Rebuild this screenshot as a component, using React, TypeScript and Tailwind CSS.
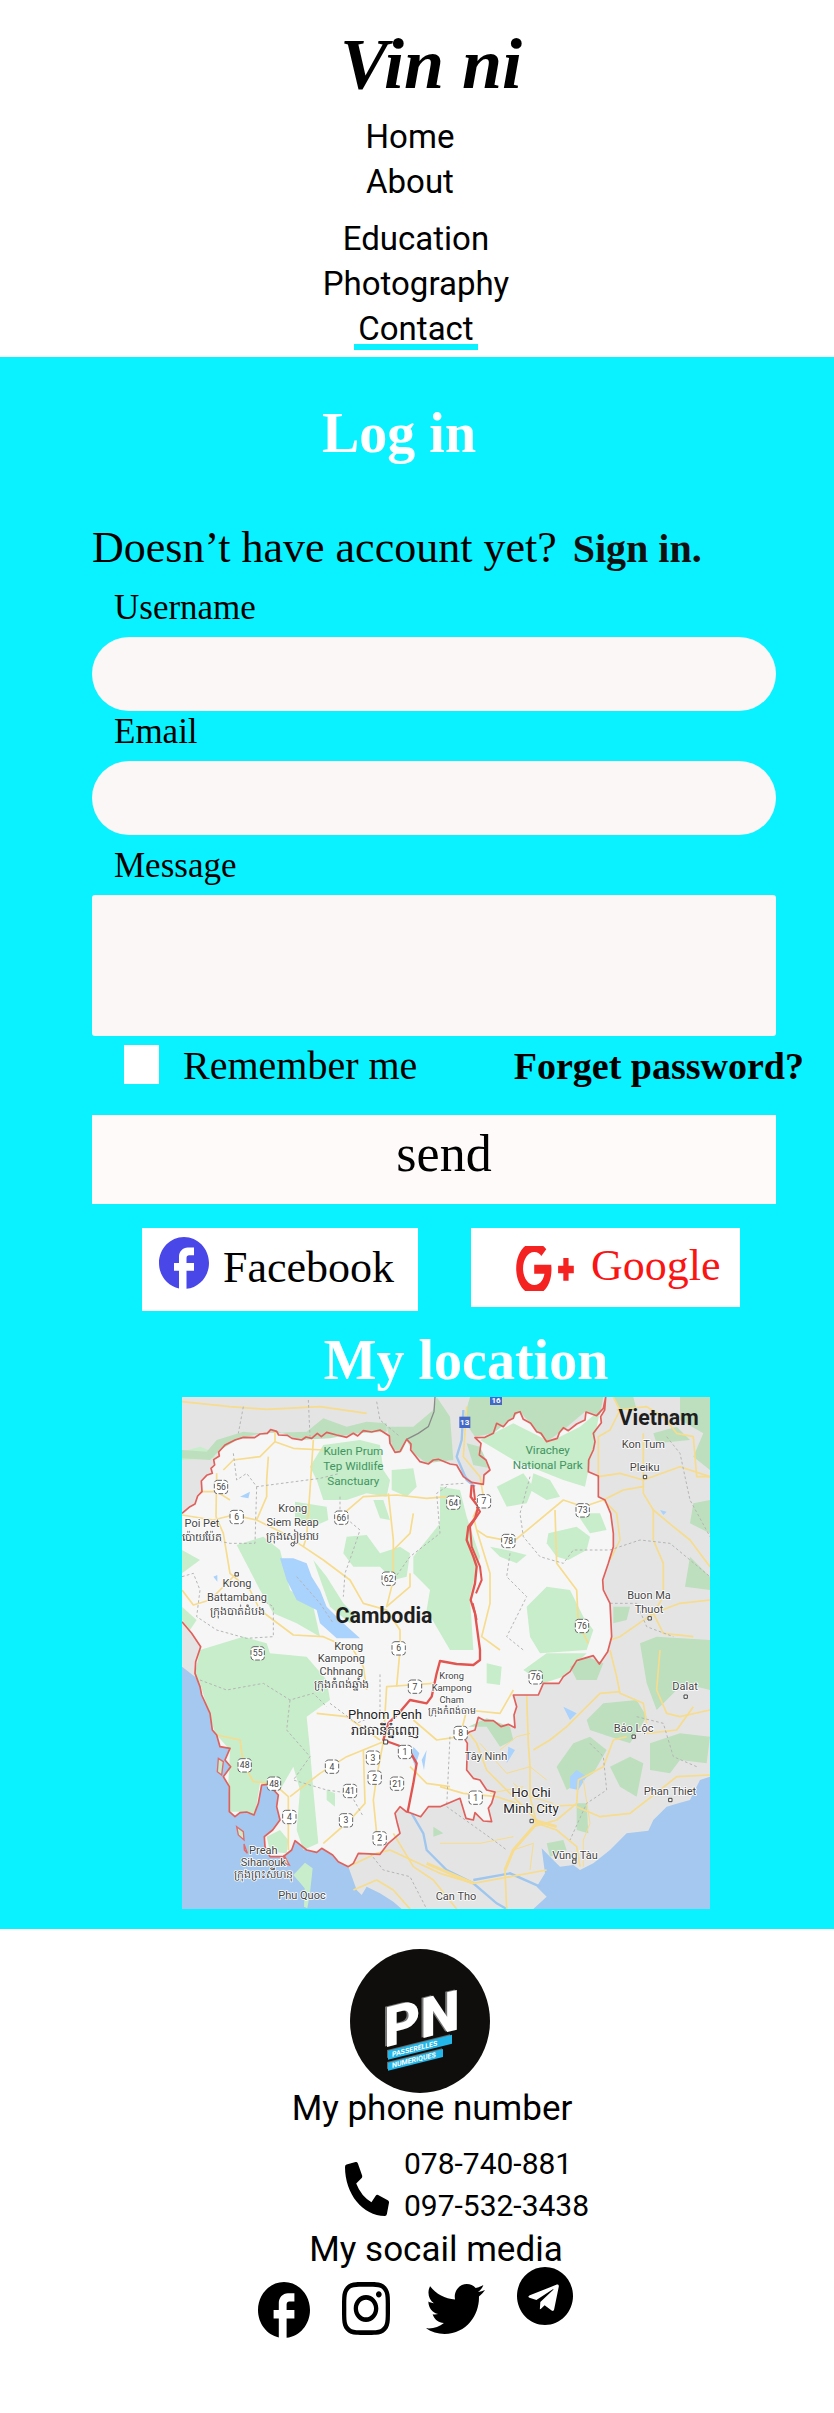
import React from "react";
import { MdFacebook } from "react-icons/md";
import { FaGooglePlusG, FaInstagram, FaPhoneAlt, FaTelegram, FaTwitter } from "react-icons/fa";

const greens = [
  "M6 185 60 170 100 185 105 205 6 210Z",
  "M430 165 540 150 600 165 610 240 630 270 620 320 560 310 500 330 430 330 410 270 390 230Z",
  "M635 240 700 235 710 290 680 320 635 300Z",
  "M700 160 740 190 730 200 690 175Z",
  "M345 335 440 350 445 390 400 410 345 405Z",
  "M580 330 610 330 630 390 600 385Z",
  "M500 440 560 435 600 490 660 470 690 490 680 560 640 570 600 530 520 530 490 490Z",
  "M780 290 840 300 860 380 900 500 870 620 880 780 810 780 740 660 750 600 700 550 700 500 780 400Z",
  "M170 465 250 440 300 480 330 600 400 650 420 740 350 700 280 670 240 600Z",
  "M6 480 60 510 6 550Z",
  "M400 510 440 560 490 640 530 680 510 700 450 650Z",
  "M6 650 50 690 30 720 6 690Z",
  "M60 780 190 740 260 760 270 790 380 800 440 870 450 930 380 980 390 1080 400 1200 415 1360 370 1380 350 1320 360 1200 340 1130 300 1200 240 1180 225 1275 180 1265 150 1265 145 1180 150 1080 105 1030 60 880 45 850Z",
  "M260 1340 300 1320 325 1350 320 1390 270 1385Z",
  "M440 1200 465 1210 465 1250 440 1230Z",
  "M900 150 1000 100 1110 155 1200 110 1260 60 1240 170 1215 290 1150 270 1050 230 1000 210Z",
  "M950 290 1030 250 1060 290 1040 340 980 350Z",
  "M1060 250 1110 270 1140 320 1100 330 1050 300Z",
  "M1105 430 1190 410 1230 440 1220 480 1165 510 1130 500 1100 460Z",
  "M1190 370 1260 370 1280 420 1230 430Z",
  "M930 470 980 480 1040 495 1010 520 960 500Z",
  "M1040 650 1100 590 1170 600 1210 680 1240 720 1220 780 1080 790 1050 740Z",
  "M1030 840 1100 790 1220 790 1150 860 1090 880Z",
  "M920 820 965 830 960 885 920 880Z",
];

const darkGreens = [
  "M6 180 80 185 110 150 190 125 240 130 380 125 430 85 500 110 560 95 620 100 620 125 530 130 450 145 360 150 285 120 180 145 120 180 90 210 6 205Z",
  "M620 110 700 110 760 60 770 21 810 80 820 210 740 220 700 190 680 150 665 185 640 180Z",
  "M870 21 1270 21 1260 75 1215 65 1150 120 1100 155 1020 65 940 130 885 140 850 90Z",
  "M860 160 900 170 930 235 880 225Z",
  "M1300 21 1360 21 1370 60 1320 60Z",
  "M1500 21 1590 21 1590 240 1540 200 1570 130 1500 90Z",
  "M1420 130 1490 110 1530 150 1430 160Z",
  "M1540 340 1590 330 1590 430 1530 400Z",
  "M1530 500 1590 560 1590 600 1515 590Z",
  "M1300 650 1350 650 1340 690 1300 700Z",
  "M1380 760 1430 740 1590 750 1590 900 1510 880 1430 960 1400 880Z",
  "M1170 830 1220 800 1270 820 1250 870 1190 870Z",
  "M1220 990 1270 940 1370 930 1400 980 1350 1060 1290 1040 1230 1020Z",
  "M1130 1130 1180 1060 1230 1040 1280 1080 1240 1150 1160 1200Z",
  "M1290 1130 1350 1100 1390 1120 1370 1220 1320 1190Z",
  "M1410 1060 1500 1030 1590 1040 1580 1120 1500 1110 1470 1150 1410 1140Z",
  "M865 1010 920 985 990 1010 1000 1050 960 1070 920 1010Z",
  "M1190 1240 1220 1240 1225 1330 1190 1320Z",
  "M1100 1360 1150 1350 1160 1380 1110 1400Z",
  "M760 1310 790 1330 760 1340Z",
];

const roads = [
  "M6 35 150 50 260 58 420 50 560 70",
  "M6 375 100 390 160 375 230 390 310 430 370 470 430 510 510 570 550 640 620 660 660 720 660 780 650 890",
  "M110 250 108 380 130 430 150 550 210 600 240 660 340 735 430 740 520 780 550 830 560 900",
  "M6 600 40 645 90 630 165 555",
  "M60 305 110 305 150 330",
  "M285 120 285 155 240 200 160 210 130 240",
  "M285 155 340 175 430 180",
  "M400 150 390 300 380 440 370 470",
  "M230 390 260 320 260 270 265 200",
  "M480 380 550 320 650 315 740 325 800 320",
  "M625 310 640 450 640 570 620 650 690 590 690 550",
  "M700 370 690 430 640 480",
  "M860 50 850 200 900 260 910 320 880 380 890 420 930 550 930 640 905 740 960 780",
  "M890 420 920 440 1000 455 1150 330 1210 350 1270 330",
  "M1125 360 1130 520 1190 600 1195 700 1225 760",
  "M1270 330 1310 370 1320 450 1290 510",
  "M1300 21 1320 60 1290 120 1255 140 1255 260 1320 250 1390 270 1500 230 1590 260",
  "M1310 60 1400 50 1450 80 1490 130 1540 140 1550 260 1590 260",
  "M1390 130 1390 310 1420 360 1480 410 1530 450 1590 530",
  "M1270 330 1330 300 1390 290",
  "M1420 360 1420 450 1450 520 1450 620 1420 670 1320 740 1290 750",
  "M1420 670 1500 640 1590 630",
  "M1420 670 1450 730 1540 740",
  "M1290 780 1310 860 1320 910 1390 940 1400 1000",
  "M1320 905 1260 910 1210 960 1160 1010 1110 1050 1060 1080",
  "M1440 780 1430 900 1460 970 1500 980 1590 960",
  "M1400 1030 1490 1020 1540 950",
  "M1060 1310 1130 1290 1190 1240 1195 1170 1270 1130 1300 1050 1340 1040",
  "M1590 1155 1490 1160 1440 1200 1350 1270 1260 1280 1190 1250",
  "M1040 915 1045 1060 1050 1130 1050 1220 1070 1300",
  "M860 1020 890 1060 920 1140 990 1210 1080 1300",
  "M780 1190 850 1210 950 1220 1010 1240",
  "M1070 1300 1130 1320 1190 1370 1200 1430",
  "M1080 1250 1190 1245",
  "M1070 1300 1000 1380 975 1440 980 1557",
  "M640 1330 700 1430 760 1470 830 1557",
  "M505 1430 590 1390 630 1380 780 1450 880 1480 1100 1440",
  "M520 1500 590 1470 640 1500 690 1557",
  "M330 1220 420 1150 500 1100 610 1055 590 1160 580 1230 590 1330",
  "M110 1035 180 1050 190 1120 220 1175 280 1180 325 1220 325 1380",
  "M550 1080 555 1240 510 1290 430 1360",
  "M610 1055 620 890 690 885 760 880",
  "M690 1130 740 1180 810 1190",
  "M700 990 770 1050 840 1040 860 960 960 970 1000 900",
  "M410 970 500 980 600 1050",
];

const dashed = [
  "M190 50 175 130 M385 30 390 140 M590 35 600 90 660 140",
  "M160 190 170 270 200 250 230 290 420 265 480 250",
  "M230 290 225 460 150 460 100 450",
  "M6 560 40 550 60 600 50 680 110 720 200 745 280 740 280 650 230 620",
  "M350 560 420 640 460 700",
  "M480 320 480 370 540 420 520 480 495 550 490 620",
  "M800 290 770 310 780 430 690 500 640 570",
  "M850 280 780 285",
  "M1050 260 1020 370 1030 440 1080 500 1150 520 1180 480 1290 480 1380 450 1470 460 1590 560",
  "M990 490 980 560 1040 620 980 740 1030 780",
  "M60 870 140 900 250 880 330 930 400 910 440 950",
  "M330 930 320 1020 390 1100 340 1170 440 1200 510 1210 550 1280",
  "M450 940 530 1000 600 970 600 850",
  "M570 1390 610 1440 690 1460 740 1557",
  "M1230 1060 1270 1100 1280 1200 1220 1240 1170 1350",
  "M1370 980 1450 1000 1480 1100 1550 1130",
  "M1290 640 1370 640 1400 710 1480 740",
  "M1460 140 1500 190 1530 330 1590 440",
  "M810 1040 800 1250 940 1350 980 1380",
];

const border =
  "M6 370 30 350 45 342 53 318 66 305 64 273 80 256 97 250 93 235 104 225 101 209 118 198 116 186 135 165 165 150 190 142 224 143 240 132 262 130 272 119 290 124 296 135 322 136 336 145 365 150 378 141 395 145 412 130 424 140 440 127 470 135 500 142 520 130 533 138 550 122 575 126 600 120 628 138 630 160 645 187 660 185 680 148 693 162 692 180 720 215 745 222 760 210 775 208 790 214 810 222 830 225 850 260 875 277 910 283 912 255 930 240 918 210 898 195 903 160 885 143 915 142 940 130 950 100 970 110 985 92 1000 85 1005 70 1020 65 1030 88 1052 100 1070 125 1083 130 1100 155 1132 145 1138 128 1150 113 1165 122 1190 102 1215 90 1218 66 1250 77 1270 55 1277 22 1274 60 1262 80 1264 98 1240 130 1245 155 1240 180 1226 210 1225 245 1255 258 1255 320 1275 330 1292 370 1300 430 1300 470 1285 520 1268 570 1270 600 1290 640 1295 740 1283 785 1258 822 1240 797 1212 805 1190 812 1170 845 1150 860 1137 880 1090 880 1075 915 1000 915 1010 950 1002 975 1005 1013 985 1003 963 1010 940 992 915 992 895 982 885 1020 870 1025 850 1040 862 1060 860 1140 880 1165 900 1170 920 1200 945 1206 935 1240 925 1255 935 1295 910 1293 885 1268 880 1290 858 1285 840 1225 780 1250 745 1250 722 1280 690 1268 680 1266 660 1250 645 1270 652 1300 660 1330 625 1360 600 1393 535 1390 520 1420 505 1430 475 1415 458 1395 425 1375 410 1387 380 1380 345 1352 335 1380 310 1400 270 1400 255 1370 253 1340 278 1320 300 1290 290 1250 295 1215 265 1183 245 1185 235 1240 222 1275 200 1266 180 1268 165 1280 148 1265 148 1190 130 1160 152 1130 135 1110 150 1075 120 1070 110 1035 97 1020 90 970 65 915 60 890 45 850 47 815 62 770 35 730 6 695";

const shields: [number, number, string][] = [
  [123, 291, "56"], [170, 381, "6"], [484, 383, "66"], [626, 566, "62"], [656, 775, "6"],
  [233, 790, "55"], [820, 338, "64"], [912, 334, "7"], [1208, 361, "73"], [985, 453, "78"],
  [1206, 708, "76"], [1067, 862, "76"], [705, 890, "7"], [842, 1029, "8"], [675, 1086, "1"],
  [579, 1103, "3"], [584, 1163, "2"], [651, 1181, "21"], [456, 1130, "4"], [510, 1203, "41"],
  [498, 1291, "3"], [599, 1345, "2"], [194, 1126, "48"], [282, 1181, "48"], [328, 1281, "4"],
  [887, 1223, "1"],
];

type Label = { x: number; y: number; size?: number; lines: string[]; step?: number };

const places: Label[] = [
  { x: 338, y: 365, lines: ["Krong", "Siem Reap", "ក្រុងសៀមរាប"] },
  { x: 66, y: 410, lines: ["Poi Pet", "ប៉ោយប៉ែត"] },
  { x: 171, y: 592, lines: ["Krong", "Battambang", "ក្រុងបាត់ដំបង"] },
  { x: 506, y: 780, lines: ["Krong"] },
  { x: 484, y: 817, step: 39, lines: ["Kampong", "Chhnang", "ក្រុងកំពង់ឆ្នាំង"] },
  { x: 815, y: 868, size: 28, step: 35, lines: ["Krong", "Kampong", "Cham", "ក្រុងកំពង់ចាម"] },
  { x: 250, y: 1393, step: 36, lines: ["Preah", "Sihanouk", "ក្រុងព្រះសីហនុ"] },
  { x: 366, y: 1528, lines: ["Phu Quoc"] },
  { x: 1390, y: 174, lines: ["Kon Tum"] },
  { x: 1394, y: 244, lines: ["Pleiku"] },
  { x: 1407, y: 627, lines: ["Buon Ma", "Thuot"] },
  { x: 1515, y: 901, lines: ["Dalat"] },
  { x: 1361, y: 1025, lines: ["Bảo Lộc"] },
  { x: 918, y: 1111, lines: ["Tây Ninh"] },
  { x: 1470, y: 1214, lines: ["Phan Thiet"] },
  { x: 1185, y: 1406, lines: ["Vũng Tàu"] },
  { x: 828, y: 1531, lines: ["Can Tho"] },
];

function MapLabel({ x, y, size = 33, step = 42, lines }: Label) {
  return (
    <text x={x} y={y} fontSize={size} textAnchor="middle">
      {lines.map((line, i) => (
        <tspan key={line} x={x} y={y + i * step}>
          {line}
        </tspan>
      ))}
    </text>
  );
}

function LocationMap() {
  return (
    <svg
      viewBox="6 21 1584 1536"
      role="img"
      aria-label="Map of Cambodia"
      className="mt-1.5 w-[528px] max-w-full font-['Roboto','Noto_Sans',sans-serif]"
    >
      <rect x="6" y="21" width="1584" height="1536" fill="#e4e4e4" />
      <path
        fill="#a4c8ef"
        d="M6 830 45 860 200 1100 300 1200 400 1350 505 1430 530 1500 545 1515 560 1490 600 1510 640 1535 665 1557 6 1557Z M1590 1160 1560 1170 1530 1230 1495 1240 1460 1250 1420 1290 1405 1322 1340 1330 1290 1380 1240 1420 1200 1440 1180 1425 1140 1430 1110 1400 1085 1375 1095 1450 1070 1490 1100 1520 1060 1557 1590 1557Z"
      />
      <path fill="#f6f6f6" d={border + "Z"} />
      <g fill="#c8edca">
        {greens.map((d) => (
          <path key={d} d={d} />
        ))}
      </g>
      <g fill="#bddfbe">
        {darkGreens.map((d) => (
          <path key={d} d={d} />
        ))}
      </g>
      <path
        fill="#a9d2fc"
        d="M300 505 340 505 380 520 395 560 420 600 440 650 490 700 540 745 470 745 420 700 410 660 350 630 320 570Z M180 320 210 305 205 325Z M100 560 112 555 112 575Z M830 230 880 280 850 260Z M700 1070 718 1090 705 1130 695 1100Z M725 1110 740 1080 732 1140Z M1150 950 1190 970 1170 990Z M1170 1160 1190 1140 1220 1160 1195 1200 1170 1195Z M980 1120 1005 1080 985 1070Z M1440 360 1460 365 1450 375Z"
      />
      <path
        fill="none"
        stroke="#9fc6ee"
        strokeWidth="7"
        d="M850 60 845 150 830 200 860 270 885 290 M695 1270 730 1330 740 1380 800 1440 880 1480 950 1540 980 1557 M880 1470 990 1450 1080 1490"
      />
      <g fill="none" stroke="#f6dc8c" strokeWidth="5" strokeLinejoin="round">
        {roads.map((d) => (
          <path key={d} d={d} />
        ))}
        <path
          strokeWidth="9"
          d="M1070 1300 1000 1380 975 1440 M740 1420 880 1480 M1060 1290 1130 1310"
        />
        <path
          strokeWidth="3"
          d="M900 1060 980 1150 1050 1130 1100 1170 M1000 1180 1050 1220 1120 1240 M930 1210 1030 1190 M780 1360 900 1360 1000 1340 M1000 1380 1060 1360 1050 1440 M1210 1170 1230 1300 1210 1350 1210 1430 M960 1080 1010 1040 1050 1030"
        />
      </g>
      <g fill="none" stroke="#b5b5b5" strokeWidth="3" strokeDasharray="8 7">
        {dashed.map((d) => (
          <path key={d} d={d} />
        ))}
      </g>
      <path
        fill="none"
        stroke="#8a8a8a"
        strokeWidth="4"
        d="M765 21 762 65 745 110 715 130 680 148"
      />
      <path
        fill="#c8edca"
        stroke="#e26a6a"
        strokeWidth="4"
        d="M115 1105 130 1115 125 1155 112 1145Z M170 1310 190 1325 192 1350 175 1335Z M192 1362 202 1390 193 1380Z M312 1395 328 1425 315 1420Z"
      />
      <path fill="#c8edca" d="M375 1418 398 1435 390 1510 382 1555 372 1550 374 1495 340 1455Z" />
      <path fill="none" stroke="#e0605c" strokeWidth="5" strokeLinejoin="round" d={border} />
      <g fill="none" stroke="#e2544f" strokeWidth="7" strokeLinejoin="round">
        <path d="M875 285 872 320 895 350 885 385 865 410 860 450 880 500 890 530 885 580 872 630 885 670 900 780 900 810 880 825 830 822 780 813 770 850 755 920 740 940 690 930 660 965 625 1000 610 1050 660 1068 690 1085 710 1120 700 1180 683 1266" />
        <path
          strokeWidth="6"
          d="M880 285 885 330 M890 350 900 365 870 410 875 470 900 530 905 570 888 610 M878 640 890 690"
        />
      </g>
      <g textAnchor="middle" fontSize="26" fill="#444">
        {shields.map(([x, y, n]) => (
          <g key={`${x}-${y}`}>
            <rect
              x={x - 20}
              y={y - 20}
              width="40"
              height="40"
              rx="9"
              fill="#fff"
              stroke="#666"
              strokeWidth="3"
              strokeDasharray="14 5"
            />
            <text x={x} y={y + 9}>
              {n}
            </text>
          </g>
        ))}
      </g>
      <g fill="#4468c8">
        <rect x="838" y="80" width="33" height="34" />
        <rect x="930" y="21" width="36" height="24" />
      </g>
      <g fill="#fff" fontSize="24" fontWeight="700" textAnchor="middle">
        <text x="854" y="106">13</text>
        <text x="948" y="40">16</text>
      </g>
      <g fill="#3f9561">
        <MapLabel x={520} y={194} size={35} step={46} lines={["Kulen Prum", "Tep Wildlife", "Sanctuary"]} />
        <MapLabel x={1103} y={193} size={35} step={45} lines={["Virachey", "National Park"]} />
      </g>
      <g fill="#444" stroke="#fff" strokeWidth="5" paintOrder="stroke" strokeLinejoin="round">
        {places.map((p) => (
          <MapLabel key={p.lines[0] + p.x} {...p} />
        ))}
      </g>
      <g fill="#fff" stroke="#444" strokeWidth="3">
        <circle cx="338" cy="463" r="5" />
        <path d="M165 548h10v10h-10zM1390 256h10v10h-10zM1404 680h10v10h-10zM1512 915h10v10h-10zM1356 1035h10v10h-10zM1466 1225h10v10h-10zM1050 1288h10v10h-10zM1178 1410h10v10h-10zM611 1050h12v12h-12z" />
      </g>
      <g fill="#222" stroke="#fff" strokeWidth="5" paintOrder="stroke" strokeLinejoin="round">
        <MapLabel x={615} y={986} size={39} step={48} lines={["Phnom Penh", "រាជធានីភ្នំពេញ"]} />
        <MapLabel x={1053} y={1220} size={40} step={49} lines={["Ho Chi", "Minh City"]} />
      </g>
      <g fill="#1e1e1e" fontWeight="700" textAnchor="middle">
        <text x="612" y="698" fontSize="64">Cambodia</text>
        <text x="1436" y="105" fontSize="64">Vietnam</text>
      </g>
    </svg>
  );
}

function PnLogo() {
  return (
    <svg
      viewBox="0 0 140 144"
      role="img"
      aria-label="PN Passerelles Numeriques"
      className="mr-6 h-36 w-[140px] font-['Liberation_Sans_Narrow','Roboto',sans-serif]"
    >
      <ellipse cx="70" cy="72" rx="70" ry="72" fill="#0f0e0c" />
      <g transform="translate(37 98) skewY(-14)">
        <g fontSize="56" fontWeight="900">
          <text x="-5" y="-1" fill="#777">PN</text>
          <text x="-3" y="0" fill="#fff">PN</text>
        </g>
        <path fill="#666" d="M0 3H63V11H0zM0 15H55V22H0z" />
        <path fill="#22b6e9" d="M1 4H65V13H1zM1 16H56V24H1z" />
        <g fill="#fff" fontSize="7" fontWeight="700">
          <text x="5" y="11">PASSERELLES</text>
          <text x="5" y="22">NUMERIQUES</text>
        </g>
      </g>
    </svg>
  );
}

function NavLink({ children }: { children: React.ReactNode }) {
  return (
    <a href="#" className="block leading-[45px]">
      {children}
    </a>
  );
}

function Field({ id, label, children }: { id: string; label: string; children: React.ReactNode }) {
  return (
    <div>
      <label htmlFor={id} className="mb-2 block pl-[22px] text-[35px] leading-[42px]">
        {label}
      </label>
      {children}
    </div>
  );
}

const pill = "block h-[74px] w-full rounded-full bg-[#fbf7f6] px-8 text-3xl outline-none";

export default function App() {
  return (
    <div className="min-h-screen overflow-x-hidden bg-white font-['Roboto',sans-serif] text-black">
      <header className="flex flex-col items-center pb-[7px]">
        <div className="pt-3.5 pl-7 font-['Liberation_Serif',serif] text-[72px] leading-[100px] font-bold italic">
          Vin ni
        </div>
        <nav className="flex flex-col items-center pr-0.5 text-center text-[33px]">
          <div className="mb-3 pr-3">
            <NavLink>Home</NavLink>
            <NavLink>About</NavLink>
          </div>
          <NavLink>Education</NavLink>
          <NavLink>Photography</NavLink>
          <a
            href="#"
            aria-current="page"
            className="mt-2 block border-b-6 border-[#0af2ff] px-1 leading-[30px]"
          >
            Contact
          </a>
        </nav>
      </header>

      <main className="bg-[#0af2ff] pt-11 pb-5 font-['Liberation_Serif',serif]">
        <h1 className="pr-9 text-center text-[56px] leading-[64px] font-bold text-white">Log in</h1>

        <form className="mt-[55px] pr-[58px] pl-[92px]" onSubmit={(e) => e.preventDefault()}>
          <p className="mb-2.5 flex items-baseline gap-4 text-[44px] leading-[56px] whitespace-nowrap">
            Doesn’t have account yet?
            <a href="#" className="text-[40px] font-bold text-[#111]">
              Sign in.
            </a>
          </p>
          <Field id="username" label="Username">
            <input id="username" type="text" className={pill} />
          </Field>
          <Field id="email" label="Email">
            <input id="email" type="email" className={pill} />
          </Field>
          <div className="mt-2.5">
            <Field id="message" label="Message">
              <textarea
                id="message"
                className="block h-[141px] w-full resize-none rounded-[3px] bg-[#fbf7f6] p-4 text-3xl outline-none"
              />
            </Field>
          </div>

          <div className="mt-1.5 -mr-7 flex items-center justify-between pl-8 leading-[48px] whitespace-nowrap">
            <label className="flex items-center gap-6 text-[40px]">
              <input type="checkbox" className="mb-1 h-[39px] w-[35px] appearance-none bg-white" />
              Remember me
            </label>
            <a href="#" className="text-[38px] font-bold">
              Forget password?
            </a>
          </div>

          <button
            type="submit"
            className="mt-[25px] block h-[89px] w-full bg-[#fffafa] pb-3 pl-5 text-[52px] leading-[64px]"
          >
            send
          </button>

          <div className="mt-6 grid grid-cols-[275fr_268fr] items-start gap-[53px] pr-9 pl-[50px] text-[44px] leading-[56px]">
            <button type="button" className="flex h-[83px] items-center gap-3.5 bg-white pb-1 pl-[17px]">
              <MdFacebook
                viewBox="2 2 20 20"
                preserveAspectRatio="none"
                className="mb-2.5 h-[52px] w-[50px] text-[#4a47e9]"
              />
              Facebook
            </button>
            <button
              type="button"
              className="flex h-[79px] items-center gap-4 bg-white pb-1 pl-11 text-[#fa1414]"
            >
              <FaGooglePlusG
                viewBox="0 90 640 332"
                preserveAspectRatio="none"
                className="mt-1.5 h-[45px] w-[60px] text-[#f52222]"
              />
              Google
            </button>
          </div>
        </form>

        <section className="mt-[18px] flex flex-col items-center pl-[58px]">
          <h2 className="pl-10 text-[56px] leading-[62px] font-bold text-white">My location</h2>
          <LocationMap />
        </section>
      </main>

      <footer className="flex flex-col items-center pt-5 pb-[74px] pl-[30px]">
        <PnLogo />
        <h2 className="text-[35px] leading-8">My phone number</h2>
        <div className="mt-[18px] flex items-center gap-[15px] pl-[70px] text-[30px] leading-[42px]">
          <FaPhoneAlt preserveAspectRatio="none" className="mt-2 h-[54px] w-11" />
          <div>
            <a href="tel:078740881" className="block">
              078-740-881
            </a>
            <a href="tel:0975323438" className="block">
              097-532-3438
            </a>
          </div>
        </div>
        <h2 className="mt-[7px] pl-2 text-[35px] leading-8">My socail media</h2>
        <div className="mt-px flex items-start pr-[34px]">
          <a href="#" aria-label="Facebook" className="mt-[15px] mr-8">
            <MdFacebook viewBox="2 2 20 20" preserveAspectRatio="none" className="h-14 w-[52px]" />
          </a>
          <a href="#" aria-label="Instagram" className="mt-[15px] mr-9">
            <FaInstagram viewBox="0 32 448 448" preserveAspectRatio="none" className="h-[53px] w-12" />
          </a>
          <a href="#" aria-label="Twitter" className="mt-[17px] mr-8">
            <FaTwitter viewBox="0 48 512 416" preserveAspectRatio="none" className="h-[50px] w-[59px]" />
          </a>
          <a href="#" aria-label="Telegram">
            <FaTelegram viewBox="0 8 496 496" preserveAspectRatio="none" className="h-[58px] w-14" />
          </a>
        </div>
      </footer>
    </div>
  );
}
